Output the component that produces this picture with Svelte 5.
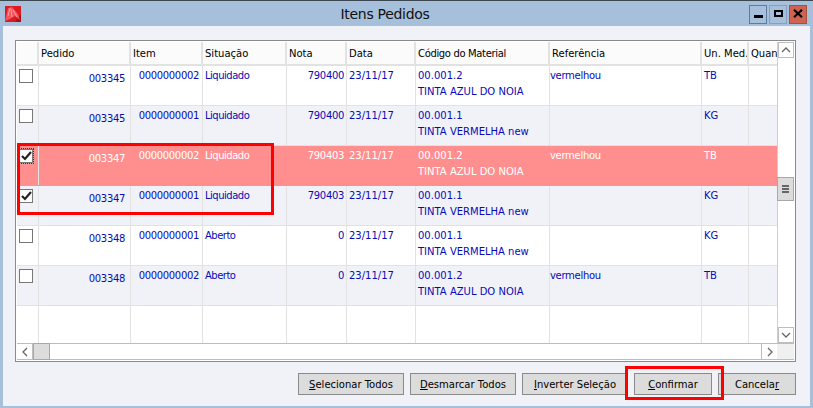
<script>
    const columns = [
        { label: 'Pedido' },
        { label: 'Item' },
        { label: 'Situação' },
        { label: 'Nota' },
        { label: 'Data' },
        { label: 'Código do Material', tight: true },
        { label: 'Referência' },
        { label: 'Un. Med.' },
        { label: 'Quan' }
    ];

    const rows = [
        { checked: false, pedido: '003345', item: '0000000002', situacao: 'Liquidado', nota: '790400', codigo: '00.001.2', nome: 'TINTA AZUL DO NOIA', ref: 'vermelhou', un: 'TB' },
        { checked: false, pedido: '003345', item: '0000000001', situacao: 'Liquidado', nota: '790400', codigo: '00.001.1', nome: 'TINTA VERMELHA new', ref: '', un: 'KG' },
        { checked: true, focus: true, selected: true, pedido: '003347', item: '0000000002', situacao: 'Liquidado', nota: '790403', codigo: '00.001.2', nome: 'TINTA AZUL DO NOIA', ref: 'vermelhou', un: 'TB' },
        { checked: true, pedido: '003347', item: '0000000001', situacao: 'Liquidado', nota: '790403', codigo: '00.001.1', nome: 'TINTA VERMELHA new', ref: '', un: 'KG' },
        { checked: false, pedido: '003348', item: '0000000001', situacao: 'Aberto', nota: '0', codigo: '00.001.1', nome: 'TINTA VERMELHA new', ref: '', un: 'KG' },
        { checked: false, pedido: '003348', item: '0000000002', situacao: 'Aberto', nota: '0', codigo: '00.001.2', nome: 'TINTA AZUL DO NOIA', ref: 'vermelhou', un: 'TB' }
    ];
</script>

<div class="window">
    <div class="titlebar">
        <svg class="app-icon" width="16" height="16" viewBox="0 0 16 16">
            <rect width="16" height="16" fill="#dc1a22" />
            <path d="M16 16 H10 L16 8 Z" fill="#a80e14" />
            <path d="M0 15 L3 2 L7 1 L13 8 L15 14 L10 10 L5 13 Z" fill="#f4545c" />
            <path d="M5 2 L3 10 M6 3 L7 11 M8 4 L12 11" stroke="#fb9ea2" stroke-width="1" fill="none" />
        </svg>
        <span class="title">Itens Pedidos</span>
        <div class="controls">
            <div class="ctl ctl-min"><i></i></div>
            <div class="ctl ctl-max"><i></i></div>
            <div class="ctl ctl-close">
                <svg width="10" height="9" viewBox="0 0 10 9"><path d="M1 0.8 L9 8.2 M9 0.8 L1 8.2" stroke="#000" stroke-width="2.2" /></svg>
            </div>
        </div>
    </div>

    <div class="body">
        <div class="grid">
            <div class="grid-top">
                <div class="table">
                    <div class="row head">
                        <div class="cell check"></div>
                        {#each columns as col}
                            <div class="cell" class:tight={col.tight}>{col.label}</div>
                        {/each}
                    </div>
                    {#each rows as r, i}
                        <div class="row" class:alt={i % 2 === 1} class:selected={r.selected}>
                            <div class="cell check">
                                <span class="box" class:focus={r.focus}>
                                    {#if r.checked}
                                        <svg width="11" height="10" viewBox="0 0 11 10"><path d="M1 5 L4 8 L10 1" stroke="#222" stroke-width="2.2" fill="none" /></svg>
                                    {/if}
                                </span>
                            </div>
                            <div class="cell num low">{r.pedido}</div>
                            <div class="cell num">{r.item}</div>
                            <div class="cell status">{r.situacao}</div>
                            <div class="cell num nota">{r.nota}</div>
                            <div class="cell">23/11/17</div>
                            <div class="cell stack"><span>{r.codigo}</span><span>{r.nome}</span></div>
                            <div class="cell reference">{r.ref}</div>
                            <div class="cell">{r.un}</div>
                            <div class="cell"></div>
                        </div>
                    {/each}
                    <div class="row filler">
                        {#each Array(10) as _}
                            <div class="cell"></div>
                        {/each}
                    </div>
                </div>
                <div class="vscroll">
                    <div class="sbtn">
                        <svg width="10" height="6" viewBox="0 0 10 6"><path d="M1 5 L5 1 L9 5" stroke="#666" stroke-width="1.3" fill="none" /></svg>
                    </div>
                    <div class="vtrack">
                        <div class="vthumb"><i></i><i></i><i></i></div>
                    </div>
                    <div class="sbtn">
                        <svg width="10" height="6" viewBox="0 0 10 6"><path d="M1 1 L5 5 L9 1" stroke="#666" stroke-width="1.3" fill="none" /></svg>
                    </div>
                </div>
            </div>
            <div class="hscroll">
                <div class="hbtn">
                    <svg width="6" height="10" viewBox="0 0 6 10"><path d="M5 1 L1 5 L5 9" stroke="#666" stroke-width="1.3" fill="none" /></svg>
                </div>
                <div class="hthumb"></div>
                <div class="htrack"></div>
                <div class="hbtn">
                    <svg width="6" height="10" viewBox="0 0 6 10"><path d="M1 1 L5 5 L1 9" stroke="#666" stroke-width="1.3" fill="none" /></svg>
                </div>
                <div class="corner"></div>
            </div>
        </div>

        <div class="actions">
            <button><u>S</u>elecionar Todos</button>
            <button><u>D</u>esmarcar Todos</button>
            <button><u>I</u>nverter Seleção</button>
            <button><u>C</u>onfirmar</button>
            <button>Cancela<u>r</u></button>
        </div>
    </div>

    <div class="mark mark-rows"></div>
    <div class="mark mark-confirm"></div>
</div>

<style>
    :global(body) {
        margin: 0;
        background: #f0f2f8;
    }

    .window {
        position: relative;
        width: 813px;
        height: 408px;
        box-sizing: border-box;
        overflow: hidden;
        display: flex;
        flex-direction: column;
        background: #a6bfda;
        border-top: 1px solid #3c4650;
        padding: 0 3px 2px 3px;
        font-family: Tahoma, "DejaVu Sans", sans-serif;
        font-size: 10px;
        color: #000;
    }

    .titlebar {
        position: relative;
        height: 25px;
        flex: none;
        display: flex;
        align-items: center;
        justify-content: center;
    }

    .app-icon {
        position: absolute;
        left: 2px;
        top: 5px;
    }

    .title {
        font-size: 14px;
        letter-spacing: -0.3px;
        color: #111;
        margin-right: 43px;
        margin-top: 1px;
    }

    .controls {
        position: absolute;
        right: 3px;
        top: 4px;
        display: flex;
        gap: 2px;
    }

    .ctl {
        width: 18px;
        height: 19px;
        box-sizing: border-box;
        border: 1px solid #5f7a9c;
        display: flex;
        align-items: center;
        justify-content: center;
    }

    .ctl-min i {
        display: block;
        width: 9px;
        height: 3px;
        background: #000;
        margin-top: 3px;
    }

    .ctl-max {
        border-color: #86a0c0;
    }

    .ctl-max i {
        display: block;
        width: 9px;
        height: 7px;
        box-sizing: border-box;
        border: 2px solid #000;
        margin-top: -2px;
    }

    .ctl-close {
        background: #cf6350;
        border-color: #a8503f;
    }

    .ctl-close svg {
        margin-top: -2px;
    }

    .body {
        flex: 1;
        display: flex;
        flex-direction: column;
        background: #f0f2f8;
        padding: 14px 14px 0 12px;
    }

    .grid {
        height: 322px;
        flex: none;
        box-sizing: border-box;
        border: 1px solid #8a8a8a;
        padding: 1px;
        background: #fff;
        display: flex;
        flex-direction: column;
    }

    .grid-top {
        flex: 1;
        min-height: 0;
        display: flex;
    }

    .table {
        flex: 1;
        min-width: 0;
        display: flex;
        flex-direction: column;
        color: #0a0ab4;
    }

    .row {
        display: grid;
        grid-template-columns: 22px 92px 72px 84px 60px 69px 134px 152px 47px 29px;
        height: 40px;
        flex: none;
        box-sizing: border-box;
        border-bottom: 1px solid #e2e2e2;
        background: #fff;
    }

    .row.alt {
        background: #f0f2f8;
    }

    .row.selected {
        background: #ff8f8f;
        color: #fff;
        border-bottom-color: #ff8f8f;
    }

    .row.head {
        height: 24px;
        background: #fbfbfb;
        color: #000;
        border-bottom: 2px solid #e2e2e2;
    }

    .row.filler {
        flex: 1;
        border-bottom: none;
    }

    .cell {
        box-sizing: border-box;
        border-right: 1px solid #e2e2e2;
        padding: 3px 0 0 2px;
        line-height: 14px;
        white-space: nowrap;
        overflow: hidden;
    }

    .row.selected .cell {
        border-right-color: #ff8f8f;
    }

    .head .cell {
        padding: 5px 0 0 2px;
        border-right: 2px solid #e2e2e2;
    }

    .head .cell.tight {
        letter-spacing: -0.35px;
    }

    .cell:last-child {
        border-right: none;
    }

    .cell.check {
        padding: 3px 0 0 2px;
    }

    .row.selected .cell.check {
        border-right-color: #e2e2e2;
    }

    .box {
        display: block;
        box-sizing: border-box;
        width: 14px;
        height: 14px;
        border: 1px solid #777;
        background: #fff;
        position: relative;
    }

    .box svg {
        position: absolute;
        left: 1px;
        top: 1px;
    }

    .box.focus {
        outline: 1px dotted #333;
    }

    .num {
        text-align: right;
        padding: 3px 3px 0 0;
        letter-spacing: -0.33px;
    }

    .num.nota {
        padding-right: 2px;
    }

    .num.low {
        padding: 6px 5px 0 0;
    }

    .status {
        letter-spacing: -0.5px;
    }

    .reference {
        letter-spacing: -0.3px;
        padding-left: 0;
    }

    .stack {
        display: flex;
        flex-direction: column;
        gap: 2px;
    }

    .vscroll {
        width: 17px;
        flex: none;
        display: flex;
        flex-direction: column;
        border-left: 1px solid #cfcfcf;
        box-sizing: border-box;
    }

    .sbtn {
        height: 16px;
        flex: none;
        box-sizing: border-box;
        border: 1px solid #bdbdbd;
        background: #fff;
        display: flex;
        align-items: center;
        justify-content: center;
    }

    .vtrack {
        flex: 1;
        display: flex;
        flex-direction: column;
        padding-top: 119px;
    }

    .vthumb {
        height: 24px;
        box-sizing: border-box;
        background: #dcdcdc;
        border: 1px solid #a8a8a8;
        display: flex;
        flex-direction: column;
        justify-content: center;
        align-items: center;
        gap: 1px;
        margin-left: -1px;
    }

    .vthumb i {
        display: block;
        width: 7px;
        height: 2px;
        background: #666;
    }

    .hscroll {
        height: 17px;
        flex: none;
        display: flex;
        box-sizing: border-box;
        border-top: 1px solid #bdbdbd;
        border-bottom: 1px solid #bdbdbd;
        background: #fff;
    }

    .hbtn {
        width: 16px;
        flex: none;
        box-sizing: border-box;
        border-right: 1px solid #bdbdbd;
        display: flex;
        align-items: center;
        justify-content: center;
    }

    .hthumb {
        width: 17px;
        flex: none;
        background: #dcdcdc;
        border: 1px solid #a8a8a8;
        box-sizing: border-box;
        margin: -1px 0;
    }

    .htrack {
        flex: 1;
    }

    .hscroll .hbtn:nth-child(4) {
        border-left: 1px solid #bdbdbd;
        border-right: none;
    }

    .corner {
        width: 17px;
        flex: none;
        background: #f0f0f0;
    }

    .actions {
        display: grid;
        grid-template-columns: 106px 106px 106px 78px 78px;
        column-gap: 6px;
        justify-content: end;
        padding-top: 11px;
    }

    button {
        height: 22px;
        box-sizing: border-box;
        border: 1px solid #8a8a8a;
        background: #dcdcdc;
        font: inherit;
        font-size: 10px;
        color: #000;
        padding: 0;
    }

    .mark {
        position: absolute;
        box-sizing: border-box;
        border: 3px solid #f00;
        pointer-events: none;
    }

    .mark-rows {
        left: 17px;
        top: 142px;
        width: 257px;
        height: 72px;
    }

    .mark-confirm {
        left: 625px;
        top: 365px;
        width: 99px;
        height: 34px;
    }
</style>
